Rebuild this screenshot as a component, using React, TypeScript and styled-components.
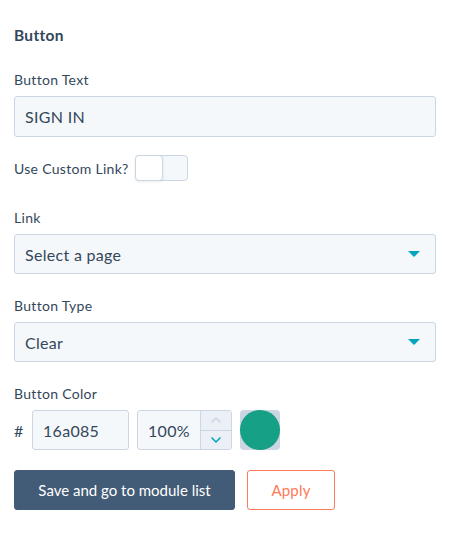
import React from "react";
import styled, { createGlobalStyle } from "styled-components";

const Global = createGlobalStyle`
  html, body { margin: 0; padding: 0; background: #fff; }
  body { font-family: Lato, "Open Sans", sans-serif; color: #33475b; letter-spacing: 0.3px; }
  * { box-sizing: border-box; }
`;

const Panel = styled.div`
  width: 454px;
  padding: 25px 18px 30px 14px;
  display: flex;
  flex-direction: column;
`;

const Title = styled.h2`
  margin: 0 0 25px 0;
  font-size: 15.5px;
  line-height: 20px;
  font-weight: 700;
  color: #33475b;
`;

const Field = styled.div<{ $mb: number }>`
  display: flex;
  flex-direction: column;
  margin-bottom: ${(p) => p.$mb}px;
`;

const Label = styled.label`
  font-size: 14px;
  line-height: 20px;
  color: #33475b;
  margin-bottom: 6px;
`;

const TextBox = styled.div<{ $h: number }>`
  height: ${(p) => p.$h}px;
  background: #f5f8fa;
  border: 1px solid #cbd6e2;
  border-radius: 3px;
  display: flex;
  align-items: center;
  padding: 0 10px;
  font-size: 16px;
  color: #33475b;
`;

const Caret = styled.span`
  margin-left: auto;
  margin-right: 5px;
  width: 0;
  height: 0;
  border-left: 6px solid transparent;
  border-right: 6px solid transparent;
  border-top: 6px solid #00a4bd;
`;

const ToggleRow = styled.div`
  display: flex;
  align-items: center;
  gap: 6px;
  margin-bottom: 27px;
  font-size: 14px;
`;

const Toggle = styled.div`
  width: 53px;
  height: 26px;
  border: 1px solid #cbd6e2;
  border-radius: 4px;
  background: #f5f8fa;
  display: flex;
`;

const Knob = styled.div`
  width: 28px;
  height: 26px;
  margin: -1px 0 0 -1px;
  background: #fff;
  border: 1px solid #cbd6e2;
  border-radius: 4px;
  box-shadow: 0 1px 3px rgba(0, 0, 0, 0.08);
`;

const ColorRow = styled.div`
  display: flex;
  align-items: center;
  height: 40px;
  margin-bottom: 20px;
`;

const Hash = styled.span`
  font-size: 16px;
  width: 18px;
`;

const SmallInput = styled.div<{ $w: number }>`
  width: ${(p) => p.$w}px;
  height: 40px;
  background: #f5f8fa;
  border: 1px solid #cbd6e2;
  border-radius: 3px;
  display: flex;
  align-items: center;
  font-size: 16px;
  color: #33475b;
  margin-right: 8px;
  overflow: hidden;
`;

const InputText = styled.span`
  padding-left: 10px;
  flex: 1;
`;

const Stepper = styled.div`
  width: 31px;
  height: 100%;
  border-left: 1px solid #cbd6e2;
  display: flex;
  flex-direction: column;
  background: #eaf0f6;
`;

const Step = styled.div<{ $last?: boolean }>`
  flex: 1;
  display: flex;
  align-items: center;
  justify-content: center;
  border-top: ${(p) => (p.$last ? "1px solid #cbd6e2" : "none")};
`;

const Swatch = styled.div`
  width: 40px;
  height: 40px;
  background: #cbd6e2;
  border-radius: 4px;
  display: flex;
  align-items: center;
  justify-content: center;
`;

const Dot = styled.div`
  width: 40px;
  height: 40px;
  border-radius: 50%;
  background: #16a085;
`;

const Buttons = styled.div`
  display: flex;
  gap: 12px;
`;

const Primary = styled.button`
  width: 221px;
  height: 40px;
  background: #425b76;
  color: #fff;
  border: 1px solid #425b76;
  border-radius: 3px;
  font-family: inherit;
  font-size: 15px;
  letter-spacing: 0;
`;

const Secondary = styled.button`
  width: 88px;
  height: 40px;
  background: #fff;
  color: #ff7a59;
  border: 1px solid #ff7a59;
  border-radius: 3px;
  font-family: inherit;
  font-size: 15px;
  letter-spacing: 0.2px;
`;

const Chevron = ({ up, color }: { up?: boolean; color: string }) => (
  <svg width="10" height="6" viewBox="0 0 10 6">
    <path
      d={up ? "M1 5 L5 1 L9 5" : "M1 1 L5 5 L9 1"}
      fill="none"
      stroke={color}
      strokeWidth="1.6"
      strokeLinecap="round"
      strokeLinejoin="round"
    />
  </svg>
);

export default function App() {
  return (
    <>
      <Global />
      <Panel>
        <Title>Button</Title>
        <Field $mb={18}>
          <Label>Button Text</Label>
          <TextBox $h={41}>SIGN IN</TextBox>
        </Field>
        <ToggleRow>
          <span>Use Custom Link?</span>
          <Toggle>
            <Knob />
          </Toggle>
        </ToggleRow>
        <Field $mb={22}>
          <Label>Link</Label>
          <TextBox $h={40}>
            Select a page
            <Caret />
          </TextBox>
        </Field>
        <Field $mb={22}>
          <Label>Button Type</Label>
          <TextBox $h={40}>
            Clear
            <Caret />
          </TextBox>
        </Field>
        <Field $mb={0}>
          <Label>Button Color</Label>
        </Field>
        <ColorRow>
          <Hash>#</Hash>
          <SmallInput $w={97}>
            <InputText>16a085</InputText>
          </SmallInput>
          <SmallInput $w={95}>
            <InputText>100%</InputText>
            <Stepper>
              <Step>
                <Chevron up color="#cbd6e2" />
              </Step>
              <Step $last>
                <Chevron color="#00a4bd" />
              </Step>
            </Stepper>
          </SmallInput>
          <Swatch>
            <Dot />
          </Swatch>
        </ColorRow>
        <Buttons>
          <Primary>Save and go to module list</Primary>
          <Secondary>Apply</Secondary>
        </Buttons>
      </Panel>
    </>
  );
}
